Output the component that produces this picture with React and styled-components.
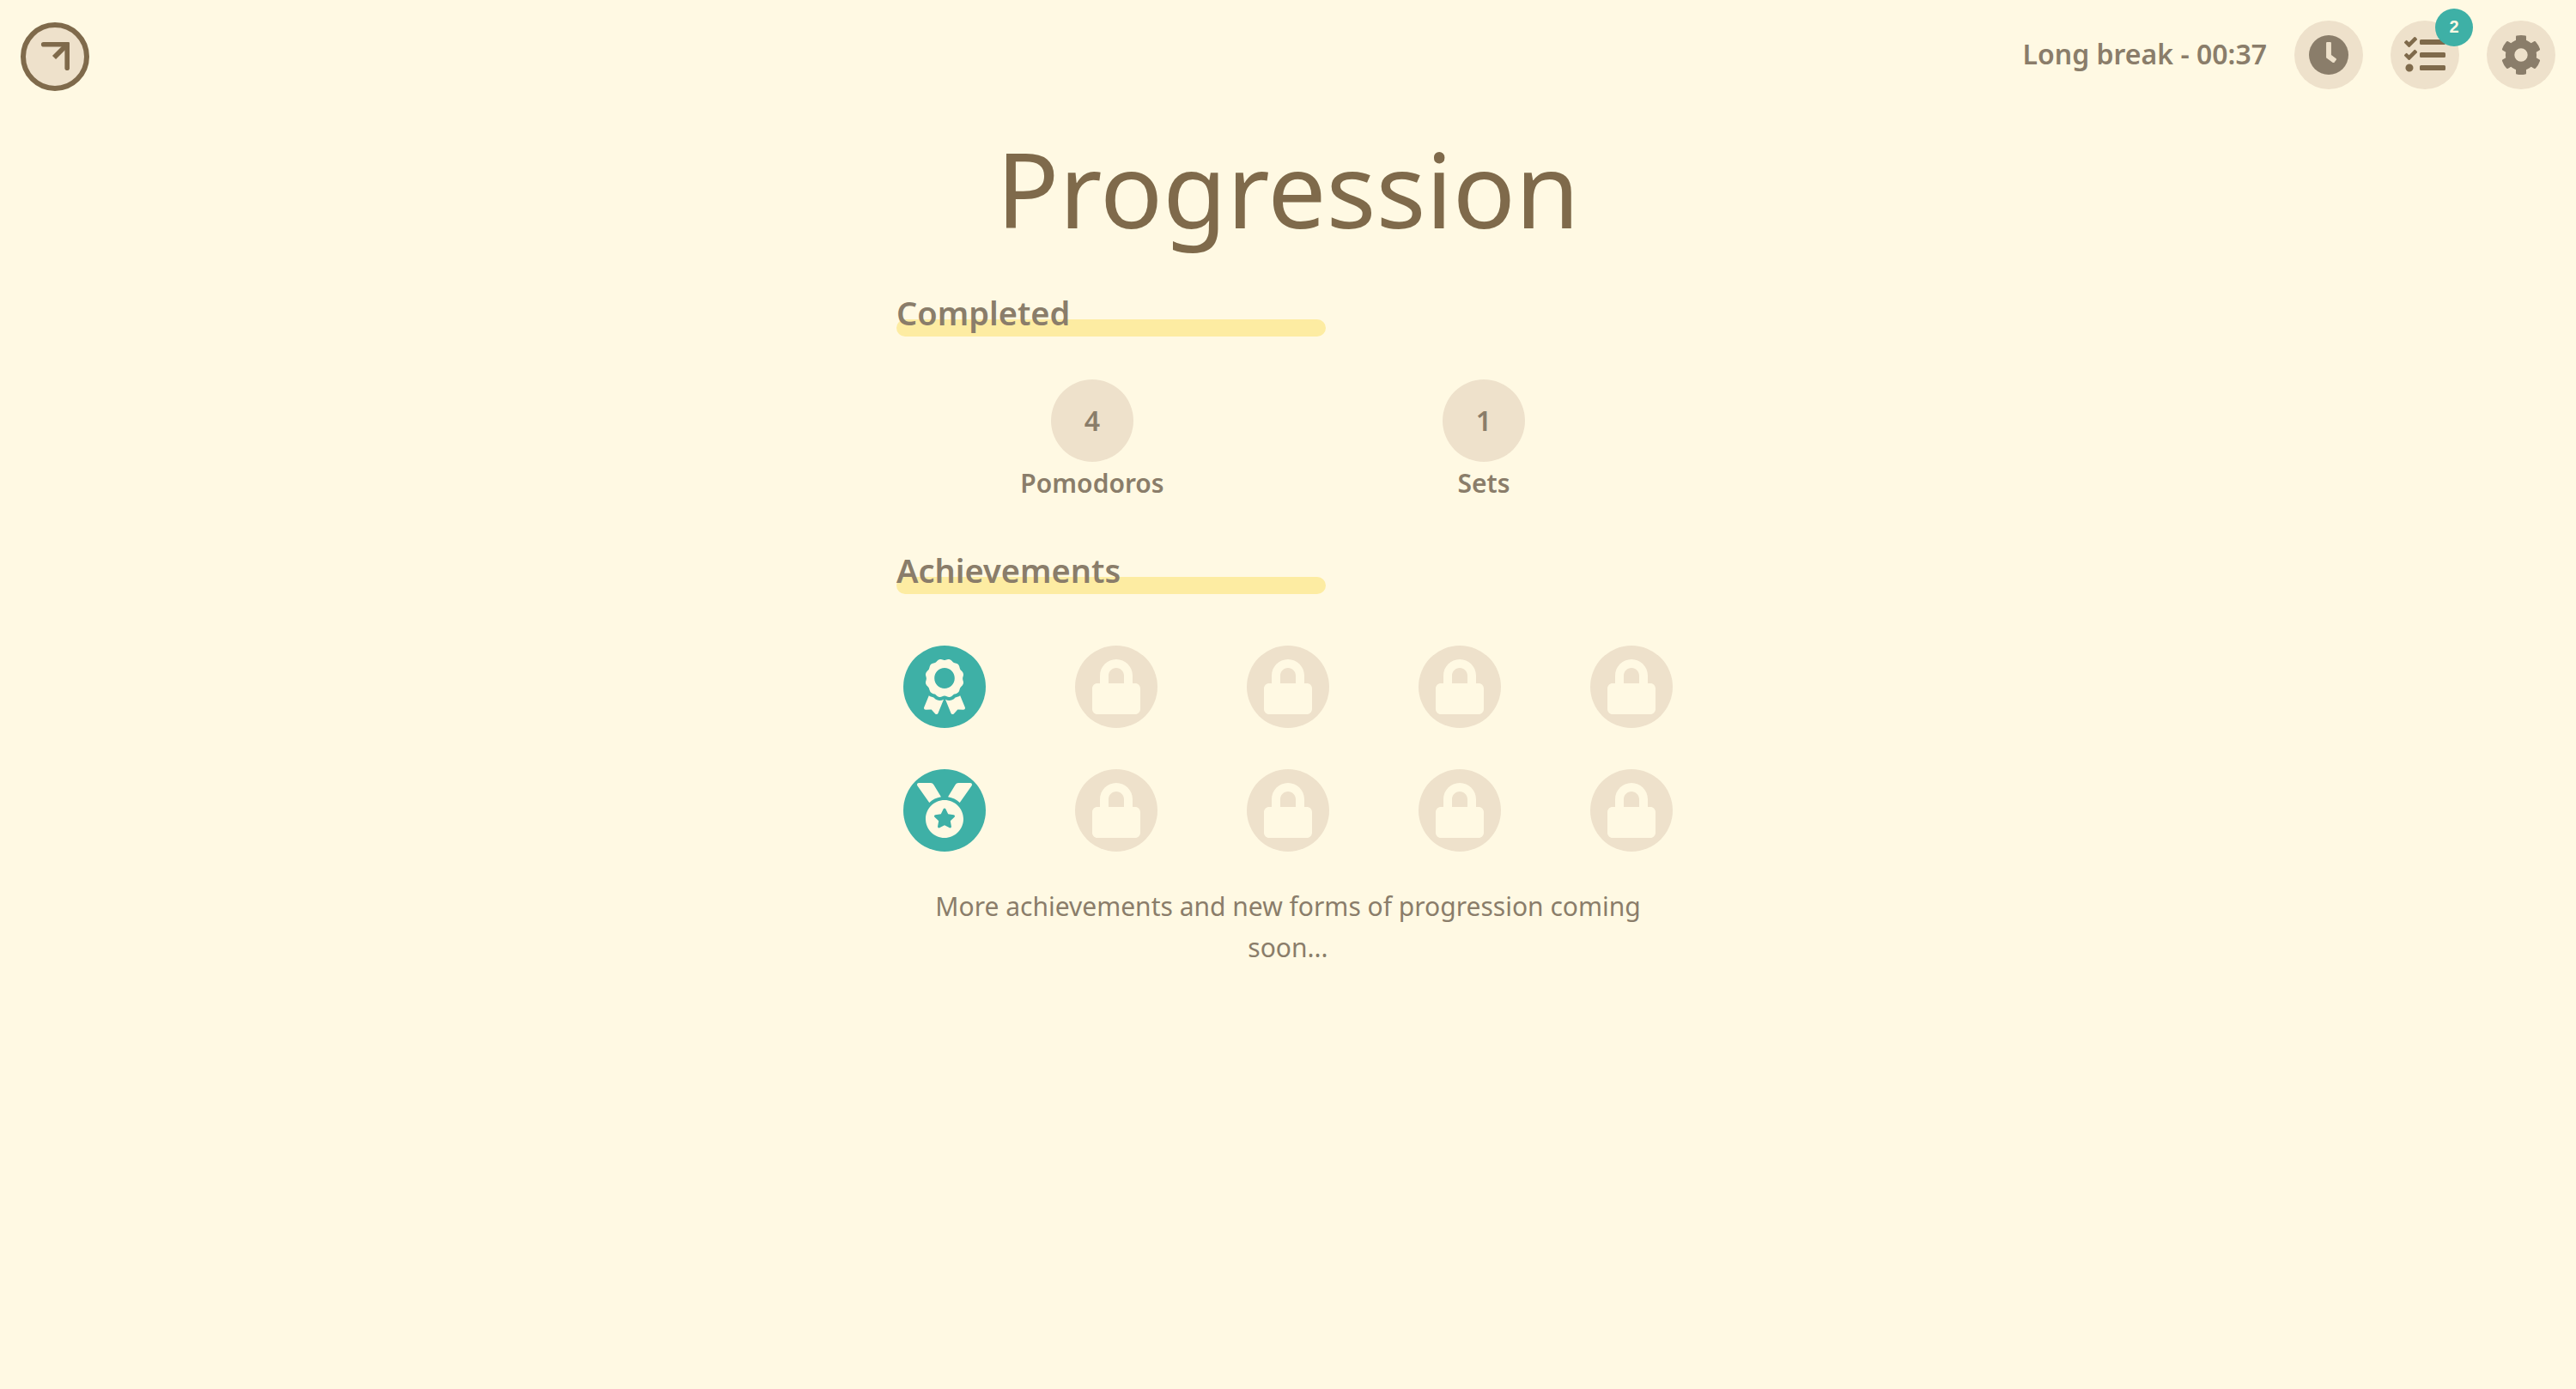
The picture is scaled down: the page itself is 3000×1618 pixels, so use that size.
import React from "react";
import styled, { createGlobalStyle } from "styled-components";
import { FaAward, FaMedal, FaLock, FaTasks } from "react-icons/fa";

const color = {
  page: "#fff9e3",
  sand: "#eee1cb",
  brown: "#7f6a4b",
  text: "#8a7d6a",
  teal: "#3eb0a6",
  highlight: "#fdeca2",
};

const GlobalStyle = createGlobalStyle`
  *, *::before, *::after { box-sizing: border-box; }
  body {
    margin: 0;
    background: ${color.page};
    color: ${color.text};
    font: 400 30px/48px "Noto Sans", "Open Sans", sans-serif;
  }
  h1, h2, p, ul { margin: 0; padding: 0; }
  ul { list-style: none; }
  svg { display: block; }
`;

const Header = styled.header`
  display: flex;
  justify-content: space-between;
  padding: 24px;
`;

const Tools = styled.div`
  display: flex;
  align-items: flex-start;
  gap: 32px;
`;

const Status = styled.span`
  font-weight: 600;
  font-size: 32px;
  line-height: 78px;
`;

const RoundButton = styled.button`
  position: relative;
  display: grid;
  place-items: center;
  width: 80px;
  height: 80px;
  padding: 0;
  border: 0;
  border-radius: 50%;
  background: ${color.sand};
  color: ${({ $strong }) => ($strong ? color.brown : color.text)};
  cursor: pointer;
`;

const LogoButton = styled(RoundButton)`
  margin-top: 2px;
  border: 6px solid ${color.brown};
`;

const Badge = styled.span`
  position: absolute;
  top: -14px;
  right: -16px;
  width: 44px;
  height: 44px;
  border-radius: 50%;
  background: ${color.teal};
  color: ${color.page};
  font-weight: 700;
  font-size: 20px;
  line-height: 42px;
  text-align: center;
`;

const Main = styled.main`
  max-width: 912px;
  margin: 0 auto;
`;

const Title = styled.h1`
  color: ${color.brown};
  font-weight: 400;
  font-size: 121px;
  line-height: 178px;
  text-align: center;
`;

const Section = styled.section`
  margin-top: ${({ $gap }) => $gap}px;
`;

const SectionTitle = styled.h2`
  position: relative;
  isolation: isolate;
  width: 500px;
  max-width: 100%;
  font-weight: 600;
  font-size: 38px;
  line-height: 56px;

  &::after {
    content: "";
    position: absolute;
    z-index: -1;
    inset: auto 0 0;
    height: 20px;
    border-radius: 10px;
    background: ${color.highlight};
  }
`;

const Totals = styled.ul`
  display: grid;
  grid-template-columns: 1fr 1fr;
  margin-top: 50px;
`;

const Total = styled.li`
  display: flex;
  flex-direction: column;
  align-items: center;
  font-weight: 600;
  line-height: 50px;
`;

const Disc = styled.span`
  display: grid;
  place-items: center;
  width: 96px;
  height: 96px;
  border-radius: 50%;
  font-size: 32px;
  line-height: 48px;
  background: ${({ $earned }) => ($earned ? color.teal : color.sand)};
`;

const Awards = styled.ul`
  display: grid;
  grid-template-columns: repeat(5, 96px);
  justify-content: space-between;
  row-gap: 48px;
  margin-top: 60px;
  padding: 0 8px;
  color: ${color.page};
`;

const Note = styled.p`
  margin-top: 40px;
  text-align: center;
`;

function ArrowIcon() {
  return (
    <svg width="40" height="40" viewBox="0 0 40 40" fill="none" stroke={color.brown} aria-hidden="true">
      <path d="M6.7 5.7H33.5" strokeWidth="5.6" strokeLinecap="round" />
      <path d="M34.2 6.5V33.2" strokeWidth="5.6" strokeLinecap="round" />
      <path d="M33.5 6.5L19 21" strokeWidth="5.8" />
      <rect x="31.4" y="2.9" width="5.6" height="5.6" rx="1.2" fill={color.brown} stroke="none" />
    </svg>
  );
}

function ClockIcon() {
  return (
    <svg width="48" height="48" viewBox="0 0 48 48" aria-hidden="true">
      <circle cx="24" cy="24" r="23" fill="currentColor" />
      <path
        d="M22 9.5H26L26.3 10V24.3L32.3 28.7V29.5L30 32.5H29.2L21.7 27V10Z"
        fill={color.sand}
        stroke={color.sand}
        strokeWidth="1.2"
        strokeLinejoin="round"
      />
    </svg>
  );
}

function GearIcon() {
  return (
    <svg width="48" height="48" viewBox="-24 -24 48 48" aria-hidden="true">
      {[0, 60, 120, 180, 240, 300].map((angle) => (
        <path
          key={angle}
          d="M-6 -16V-21.4Q-6 -22.3 -5 -22.5Q0 -23.5 5 -22.5Q6 -22.3 6 -21.4V-16Z"
          fill="currentColor"
          transform={`rotate(${angle})`}
        />
      ))}
      <circle r="12.9" fill="none" stroke="currentColor" strokeWidth="10.4" />
    </svg>
  );
}

const totals = [
  { label: "Pomodoros", count: 4 },
  { label: "Sets", count: 1 },
];

const awards = [
  FaAward, null, null, null, null,
  FaMedal, null, null, null, null,
];

export default function App() {
  return (
    <>
      <GlobalStyle />
      <Header>
        <LogoButton type="button" aria-label="Open menu"><ArrowIcon /></LogoButton>
        <Tools>
          <Status>Long break - 00:37</Status>
          <RoundButton type="button" aria-label="Timer"><ClockIcon /></RoundButton>
          <RoundButton type="button" aria-label="Tasks" $strong>
            <FaTasks size={48} />
            <Badge>2</Badge>
          </RoundButton>
          <RoundButton type="button" aria-label="Settings"><GearIcon /></RoundButton>
        </Tools>
      </Header>
      <Main>
        <Title>Progression</Title>
        <Section $gap={28}>
          <SectionTitle>Completed</SectionTitle>
          <Totals>
            {totals.map(({ label, count }) => (
              <Total key={label}>
                <Disc>{count}</Disc>
                {label}
              </Total>
            ))}
          </Totals>
        </Section>
        <Section $gap={48}>
          <SectionTitle>Achievements</SectionTitle>
          <Awards>
            {awards.map((Icon, i) => (
              <li key={i}>
                <Disc $earned={Boolean(Icon)}>
                  {Icon ? <Icon size={64} /> : <FaLock size={64} />}
                </Disc>
              </li>
            ))}
          </Awards>
          <Note>More achievements and new forms of progression coming soon...</Note>
        </Section>
      </Main>
    </>
  );
}
